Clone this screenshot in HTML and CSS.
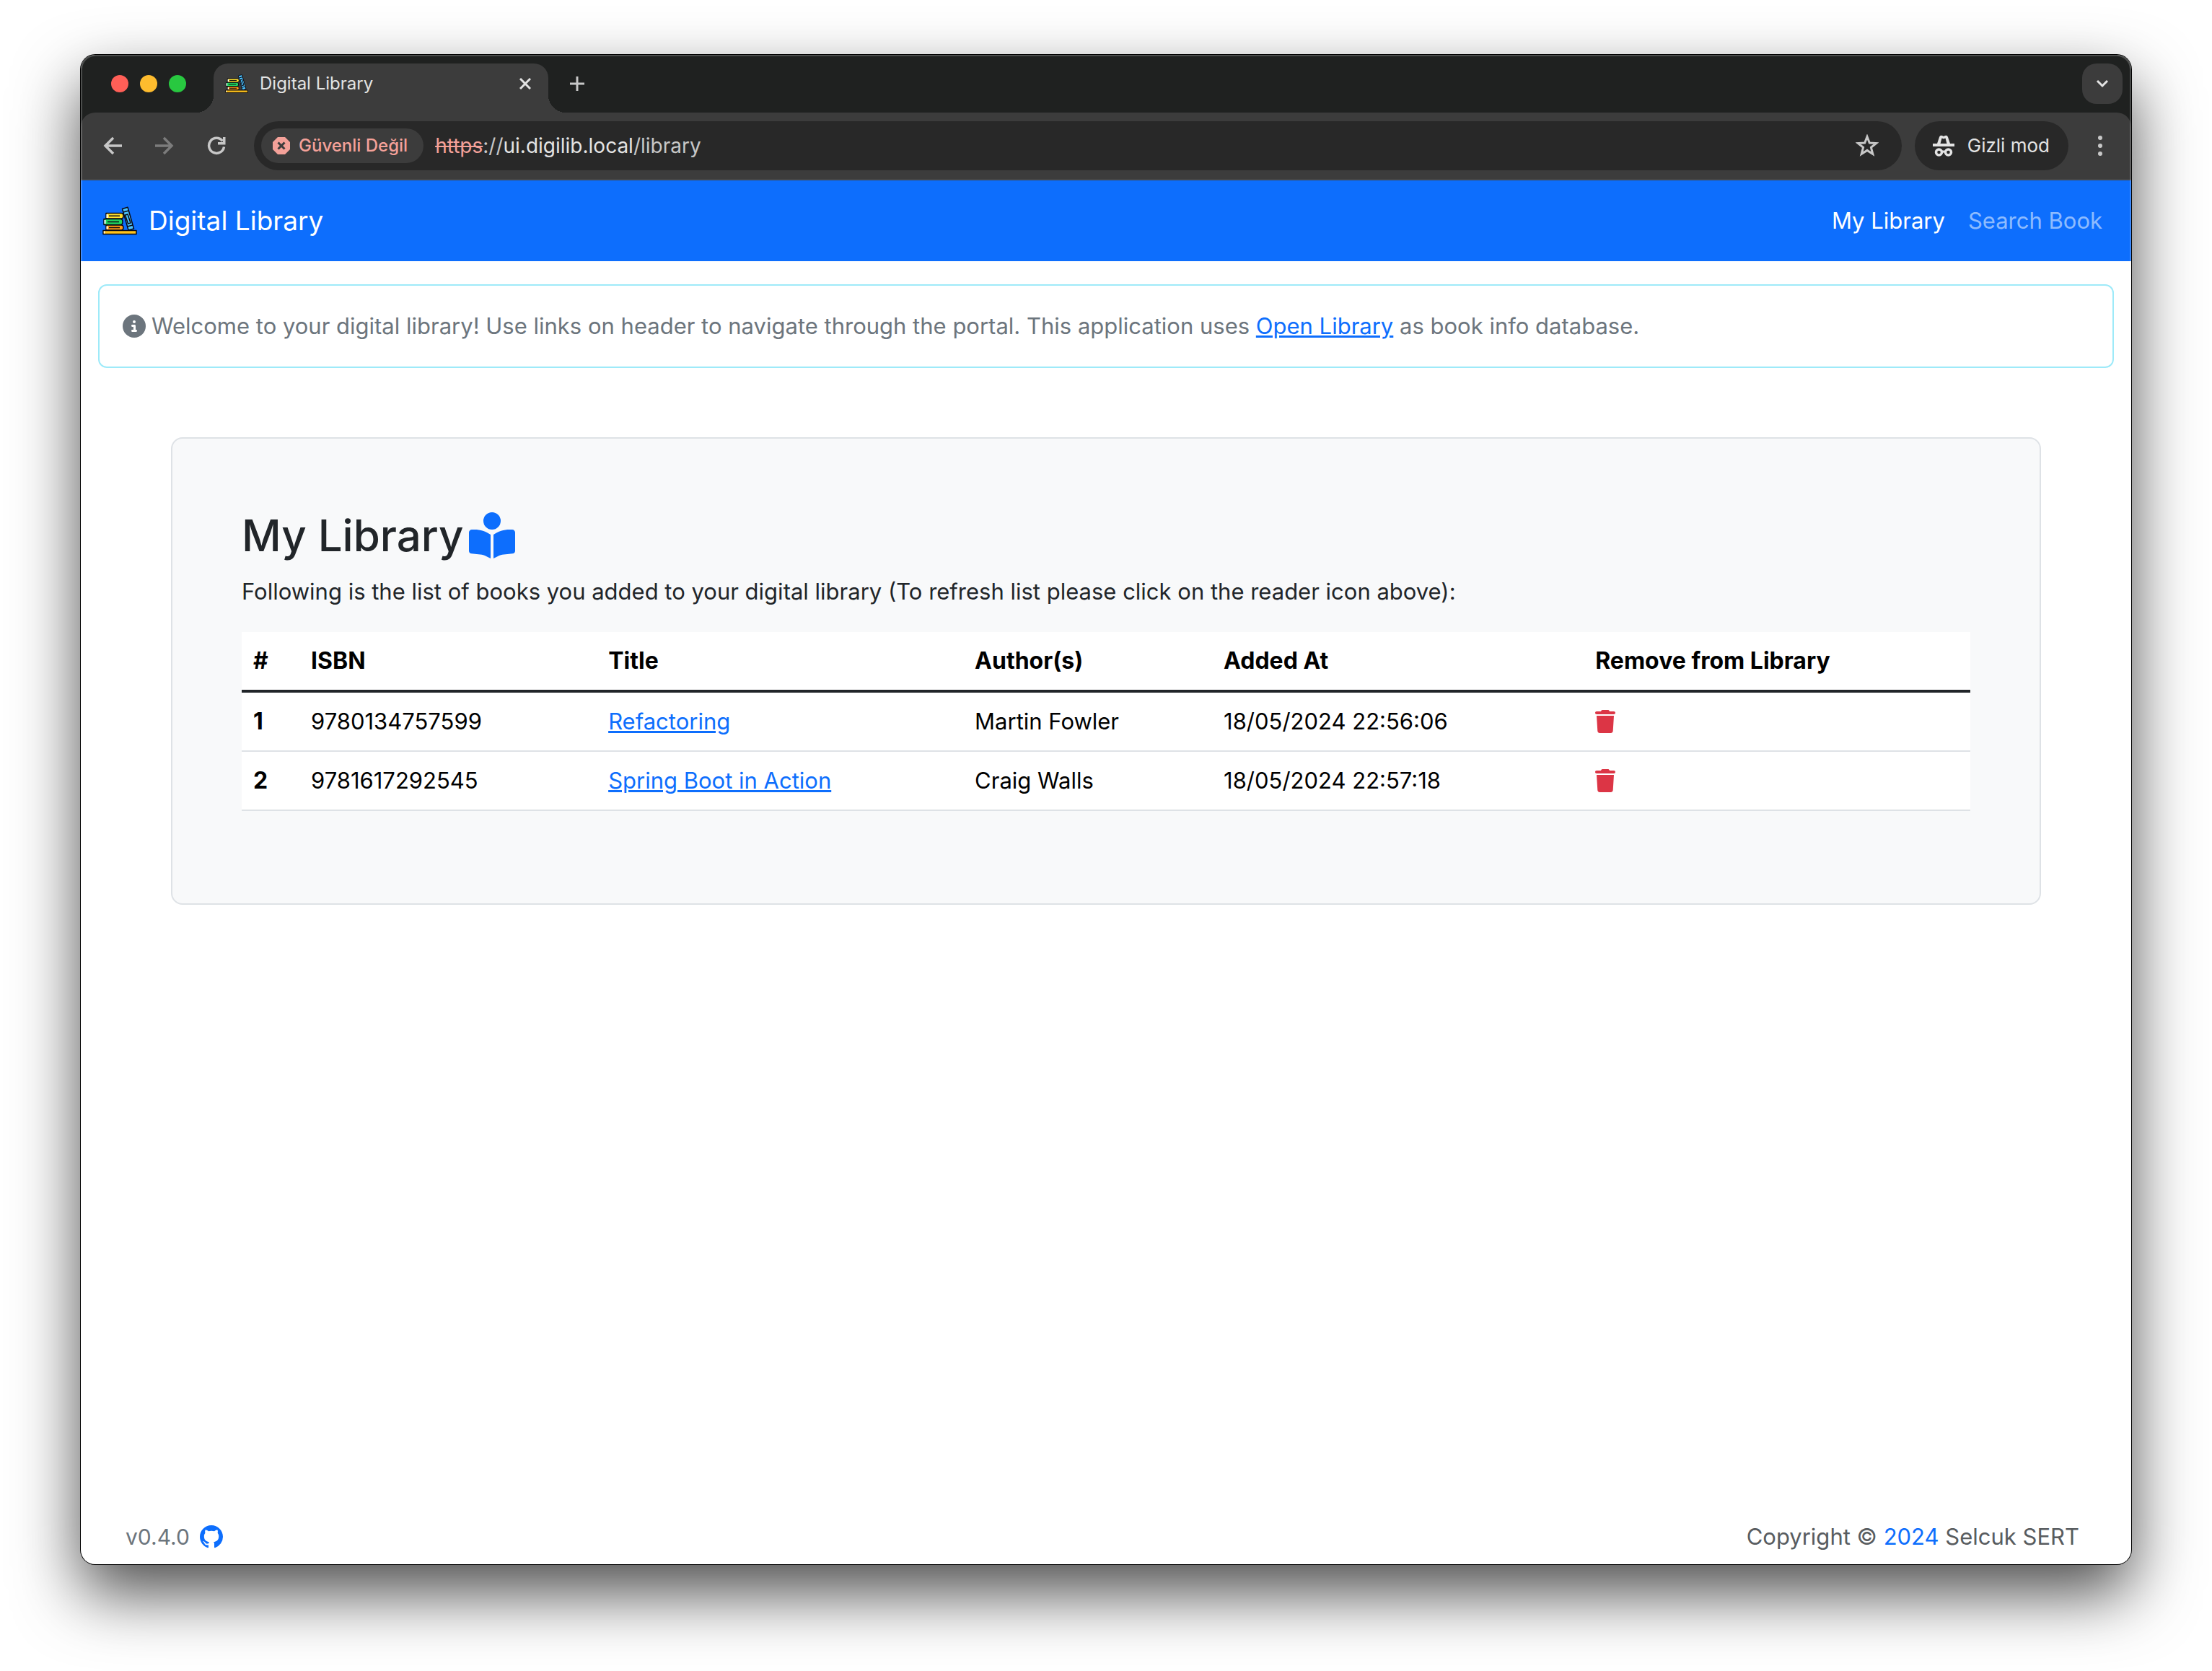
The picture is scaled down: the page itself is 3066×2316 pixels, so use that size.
FILE: index.html
```html
<!DOCTYPE html>
<html lang="en">
<head>
<meta charset="utf-8">
<title>Digital Library</title>
<link rel="stylesheet" href="styles.css">
</head>
<body>
<svg class="sprite" aria-hidden="true">
  <symbol id="books" viewBox="0 0 48 40">
    <g stroke="#0b0b14" stroke-width="1.500" stroke-linejoin="round">
      <path d="M5 9.500h21q3 0 3 3.800t-3 3.800H5z" fill="#ffe02e"/>
      <path d="M2 17.500h23q3 0 3 4t-3 4H2z" fill="#1fd65f"/>
      <path d="M5 26h21q3 0 3 3.500t-3 3.500H5z" fill="#ff9a14"/>
      <path d="M6.500 11v5M3.500 19v5M6.500 27.500v4" stroke="#fff" stroke-width="2"/>
      <path d="M9 13.300h15M7 21.500h16M9 29.500h15" fill="none"/>
      <path d="M27.500 3.500l7.500-2.200 8.500 29.700-7.500 2z" fill="#4cc3ff"/>
      <path d="M29 8l7.500-2M34.500 28l7.500-2M31.500 12l3.500-1 4 12-3.500 1z" fill="none"/>
      <path d="M1 33.500h46v5H1z" fill="#ffc21a"/>
      <path d="M2.500 34.500v3" stroke="#fff"/>
    </g>
  </symbol>
  <symbol id="trash" viewBox="0 0 448 512"><path d="M135.2 17.7L128 32H32C14.3 32 0 46.3 0 64S14.3 96 32 96H416c17.7 0 32-14.3 32-32s-14.3-32-32-32H320l-7.2-14.3C307.4 6.8 296.3 0 284.2 0H163.8c-12.1 0-23.2 6.8-28.6 17.7zM416 128H32L53.2 467c1.6 25.3 22.6 45 47.9 45H346.9c25.3 0 46.3-19.7 47.9-45L416 128z"/></symbol>
</svg>
<div class="window">
  <header class="chrome">
    <div class="tabstrip">
      <div class="lights"><button class="light red" aria-label="Close window"></button><button class="light amber" aria-label="Minimize window"></button><button class="light green" aria-label="Zoom window"></button></div>
      <div class="tab">
        <svg class="favicon"><use href="#books"/></svg>
        <span class="tab-title">Digital Library</span>
        <button class="icon-button" aria-label="Close tab"><svg width="16" height="16" viewBox="0 0 16 16"><path d="M1 1l14 14M15 1L1 15" stroke="#e3e3e3" stroke-width="3"/></svg></button>
      </div>
      <button class="icon-button new-tab" aria-label="New tab"><svg width="20" height="20" viewBox="0 0 20 20"><path d="M10 0v20M0 10h20" stroke="#c7c7c7" stroke-width="3"/></svg></button>
      <button class="tab-search" aria-label="Search tabs"><svg width="18" height="12" viewBox="0 0 18 12"><path d="M2 2l7 7 7-7" fill="none" stroke="#e3e3e3" stroke-width="3"/></svg></button>
    </div>
    <div class="toolbar">
      <div class="nav-buttons">
        <button class="icon-button" aria-label="Back"><svg width="26" height="26" viewBox="0 0 26 26"><path d="M26 13H4M14 2L3 13l11 11" fill="none" stroke="#c7c7c7" stroke-width="3.500"/></svg></button>
        <button class="icon-button" aria-label="Forward"><svg width="26" height="26" viewBox="0 0 26 26"><path d="M0 13h22M12 2l11 11-11 11" fill="none" stroke="#7c7c7c" stroke-width="3.500"/></svg></button>
        <button class="icon-button" aria-label="Reload"><svg width="26" height="26" viewBox="0 0 26 26"><path d="M21.500 6.500A10.500 10.500 0 1 0 23.500 14.500" fill="none" stroke="#c7c7c7" stroke-width="3.500"/><path d="M22 1h3.500v10.500H15V8h7z" fill="#c7c7c7"/></svg></button>
      </div>
      <div class="omnibox">
        <button class="chip"><svg width="24" height="24" viewBox="0 0 24 24"><path d="M7 0h10l7 7v10l-7 7H7l-7-7V7z" fill="#f4a199"/><path d="M7.500 7.500l9 9M16.500 7.500l-9 9" stroke="#3c3c3c" stroke-width="3"/></svg>Güvenli Değil</button>
        <span class="url"><s>https</s><span class="dim">://</span>ui.digilib.local<span class="dim">/library</span></span>
        <button class="icon-button" aria-label="Bookmark this tab"><svg width="32" height="32" viewBox="0 0 32 32"><path d="M16 3.500l3.300 8.600 9.200.500-7.100 5.800 2.400 9-7.800-5-7.800 5 2.400-9-7.100-5.800 9.200-.500z" fill="none" stroke="#c7c7c7" stroke-width="3"/></svg></button>
      </div>
      <button class="incognito"><svg width="30" height="30" viewBox="0 0 30 30"><path d="M0 12h30v4H0zM6 12L9 3q1-3 4-2l2 1 2-1q3-1 4 2l3 9z" fill="#e3e3e3"/><path d="M10.500 12l2-7.500 2.500 1 2.500-1 2 7.500z" fill="#282828"/><circle cx="8.500" cy="24" r="4" fill="none" stroke="#e3e3e3" stroke-width="3.500"/><circle cx="21.500" cy="24" r="4" fill="none" stroke="#e3e3e3" stroke-width="3.500"/><path d="M12 24q3-2 6 0" fill="none" stroke="#e3e3e3" stroke-width="3"/></svg>Gizli mod</button>
      <button class="icon-button menu" aria-label="Menu"><svg width="6" height="28" viewBox="0 0 6 28" fill="#c7c7c7"><circle cx="3" cy="3" r="3"/><circle cx="3" cy="14" r="3"/><circle cx="3" cy="25" r="3"/></svg></button>
    </div>
  </header>

  <nav class="navbar">
    <a class="brand" href="#"><svg class="logo"><use href="#books"/></svg>Digital Library</a>
    <a class="nav-link active" href="#">My Library</a>
    <a class="nav-link" href="#">Search Book</a>
  </nav>

  <main>
    <p class="alert"><svg width="32" height="32" viewBox="0 0 512 512"><path fill="currentColor" d="M256 512A256 256 0 1 0 256 0a256 256 0 1 0 0 512zM216 336h24V272H216c-13.300 0-24-10.700-24-24s10.700-24 24-24h48c13.300 0 24 10.700 24 24v88h8c13.300 0 24 10.700 24 24s-10.700 24-24 24H216c-13.300 0-24-10.700-24-24s10.700-24 24-24zm40-208a32 32 0 1 1 0 64 32 32 0 1 1 0-64z"/></svg><span>Welcome to your digital library! Use links on header to navigate through the portal. This application uses <a href="#">Open Library</a> as book info database.</span></p>

    <section class="card">
      <h2>My Library <button class="icon-button" aria-label="Refresh list"><svg width="64" height="64" viewBox="0 0 512 512"><path fill="#0d6efd" d="M160 96a96 96 0 1 1 192 0A96 96 0 1 1 160 96zm80 152V512l-48.400-24.200c-20.900-10.400-43.500-17-66.800-19.300l-96-9.600C12.500 457.200 0 443.500 0 427V224c0-17.700 14.300-32 32-32H62.300c63.600 0 125.600 19.600 177.700 56zm32 264V248c52.100-36.400 114.100-56 177.700-56H480c17.700 0 32 14.300 32 32V427c0 16.400-12.500 30.200-28.800 31.800l-96 9.600c-23.200 2.300-45.900 8.900-66.800 19.300L272 512z"/></svg></button></h2>
      <p>Following is the list of books you added to your digital library (To refresh list please click on the reader icon above):</p>
      <table>
        <colgroup><col class="c-num"><col class="c-isbn"><col class="c-title"><col class="c-author"><col class="c-added"><col></colgroup>
        <thead><tr><th scope="col">#</th><th scope="col">ISBN</th><th scope="col">Title</th><th scope="col">Author(s)</th><th scope="col">Added At</th><th scope="col">Remove from Library</th></tr></thead>
        <tbody>
          <tr><th scope="row">1</th><td>9780134757599</td><td><a href="#">Refactoring</a></td><td>Martin Fowler</td><td>18/05/2024 22:56:06</td><td><button class="icon-button" aria-label="Remove Refactoring"><svg class="trash"><use href="#trash"/></svg></button></td></tr>
          <tr><th scope="row">2</th><td>9781617292545</td><td><a href="#">Spring Boot in Action</a></td><td>Craig Walls</td><td>18/05/2024 22:57:18</td><td><button class="icon-button" aria-label="Remove Spring Boot in Action"><svg class="trash"><use href="#trash"/></svg></button></td></tr>
        </tbody>
      </table>
    </section>
  </main>

  <footer>
    <div class="version">v0.4.0 <a href="#" aria-label="GitHub"><svg width="32" height="32" viewBox="0 0 16 16"><path fill="currentColor" d="M8 0C3.580 0 0 3.580 0 8c0 3.540 2.290 6.530 5.470 7.590.400.070.550-.170.550-.380 0-.190-.010-.820-.010-1.490-2.010.370-2.530-.490-2.690-.940-.090-.230-.480-.940-.820-1.130-.280-.150-.680-.520-.010-.530.630-.010 1.080.580 1.230.820.720 1.210 1.870.870 2.330.660.070-.520.280-.870.510-1.070-1.780-.200-3.640-.890-3.640-3.950 0-.870.310-1.590.820-2.150-.080-.200-.360-1.020.080-2.120 0 0 .670-.210 2.200.820.640-.180 1.320-.270 2-.270s1.360.090 2 .270c1.530-1.040 2.200-.820 2.200-.820.440 1.100.160 1.920.080 2.120.510.560.820 1.270.820 2.150 0 3.070-1.870 3.750-3.650 3.950.290.250.540.730.540 1.480 0 1.070-.010 1.930-.010 2.200 0 .210.150.460.550.380A8 8 0 0 0 16 8c0-4.420-3.580-8-8-8z"/></svg></a></div>
    <div>Copyright © <a href="#">2024</a> Selcuk SERT</div>
  </footer>
</div>
</body>
</html>
```
FILE: styles.css
```css
* { box-sizing: border-box; }

body {
  margin: 0;
  min-height: 100vh;
  padding: 76px 112px 148px;
  display: flex;
  background: #fff;
  color: #212529;
  font: 31px/48px Inter, "Liberation Sans", sans-serif;
}

a { color: #0d6efd; }
h2, p { margin: 0; }
svg { display: block; flex: none; }
button { font: inherit; color: inherit; border: 0; padding: 0; margin: 0; }
.icon-button { display: inline-flex; background: none; flex: none; }
.sprite { position: absolute; width: 0; height: 0; }

.window {
  position: relative;
  flex: 1;
  min-width: 0;
  display: flex;
  flex-direction: column;
  background: #fff;
  border-radius: 20px;
  overflow: hidden;
  box-shadow: 0 0 0 1px #000, 0 40px 90px rgba(0, 0, 0, .7);
}

/* Thin light rim over the window's inner edge */
.window::after {
  content: "";
  position: absolute;
  inset: 0;
  border-radius: inherit;
  box-shadow: inset 0 0 0 2px rgba(255, 255, 255, .2);
  pointer-events: none;
}

/* Browser chrome */
.chrome { background: #1f2120; color: #e3e3e3; }

.tabstrip {
  height: 80px;
  display: flex;
  align-items: center;
  padding: 0 12px 0 42px;
}
.lights { display: flex; gap: 16px; margin-right: 38px; }
.light { width: 24px; height: 24px; border-radius: 50%; }
.red { background: #ff5f57; }
.amber { background: #febc2e; }
.green { background: #28c840; }

.tab {
  position: relative;
  align-self: flex-end;
  width: 464px;
  height: 68px;
  padding: 0 24px 12px 16px;
  display: flex;
  align-items: center;
  background: #3c3c3c;
  border-radius: 20px 20px 0 0;
}
.tab::before, .tab::after {
  content: "";
  position: absolute;
  bottom: 0;
  width: 24px;
  height: 24px;
}
.tab::before { right: 100%; background: radial-gradient(circle at 0 0, transparent 24px, #3c3c3c 24px); }
.tab::after { left: 100%; background: radial-gradient(circle at 100% 0, transparent 24px, #3c3c3c 24px); }
.favicon { width: 32px; height: 28px; margin-right: 16px; }
.tab-title { flex: 1; font-size: 24px; line-height: 32px; }
.new-tab { margin-left: 30px; }
.tab-search {
  width: 56px;
  height: 56px;
  margin-left: auto;
  display: grid;
  place-items: center;
  background: #3c3c3c;
  border-radius: 20px;
}

.toolbar {
  height: 94px;
  display: flex;
  align-items: center;
  padding: 0 40px 0 31px;
  background: #3c3c3c;
  border-bottom: 2px solid #474747;
  border-radius: 20px 20px 0 0;
}
.nav-buttons { display: flex; gap: 46px; margin-right: 39px; }
.omnibox {
  flex: 1;
  height: 68px;
  display: flex;
  align-items: center;
  padding: 0 32px 0 10px;
  background: #282828;
  border-radius: 34px;
}
.chip {
  height: 48px;
  display: flex;
  align-items: center;
  gap: 12px;
  padding: 0 22px 0 16px;
  background: #3c3c3c;
  border-radius: 24px;
  color: #f4a199;
  font-size: 24px;
  font-weight: 500;
}
.url { flex: 1; margin-left: 16px; font-size: 28px; }
.url s { color: #f4a199; }
.dim { color: #c7c7c7; }
.incognito {
  height: 68px;
  margin: 0 41px 0 18px;
  padding: 0 26px 0 25px;
  display: flex;
  align-items: center;
  gap: 18px;
  background: #282828;
  border-radius: 34px;
  font-size: 26px;
}

/* Application */
.navbar {
  height: 112px;
  display: flex;
  align-items: center;
  gap: 32px;
  padding: 0 40px 0 30px;
  background: #0d6efd;
}
.brand {
  display: flex;
  align-items: center;
  gap: 16px;
  margin-right: auto;
  color: #fff;
  font-size: 37px;
  text-decoration: none;
}
.logo { width: 48px; height: 40px; }
.nav-link { color: rgba(255, 255, 255, .55); text-decoration: none; }
.nav-link.active { color: #fff; }

main { padding: 32px 24px; }

.alert {
  display: flex;
  align-items: center;
  gap: 8px;
  padding: 32px;
  border: 2px solid #9eeaf9;
  border-radius: 12px;
  color: #6c757d;
}

.card {
  max-width: 2592px;
  margin: 96px auto 0;
  padding: 96px;
  background: #f8f9fa;
  border: 2px solid #dee2e6;
  border-radius: 16px;
}
.card h2 {
  display: flex;
  align-items: center;
  gap: 8px;
  margin-bottom: 16px;
  font-size: 60px;
  font-weight: 500;
  line-height: 76px;
}

table {
  width: 100%;
  margin: 32px 0;
  table-layout: fixed;
  border-collapse: separate;
  border-spacing: 0;
  background: #fff;
  color: #000;
}
th, td {
  padding: 16px;
  text-align: left;
  border-bottom: 2px solid #dee2e6;
}
th { font-size: 32px; font-weight: 700; }
thead th { border-bottom: 4px solid #212529; }
td .icon-button { display: flex; }
.trash { width: 28px; height: 32px; fill: #dc3545; }
.c-num { width: 3.34%; }
.c-isbn { width: 17.2%; }
.c-title { width: 21.2%; }
.c-author { width: 14.4%; }
.c-added { width: 21.5%; }

footer {
  display: flex;
  justify-content: space-between;
  margin-top: auto;
  padding: 0 72px 14px 62px;
  color: #585c5f;
}
footer a { text-decoration: none; }
.version {
  display: flex;
  align-items: center;
  gap: 14px;
  color: #6c757d;
  font-size: 30px;
}
```
